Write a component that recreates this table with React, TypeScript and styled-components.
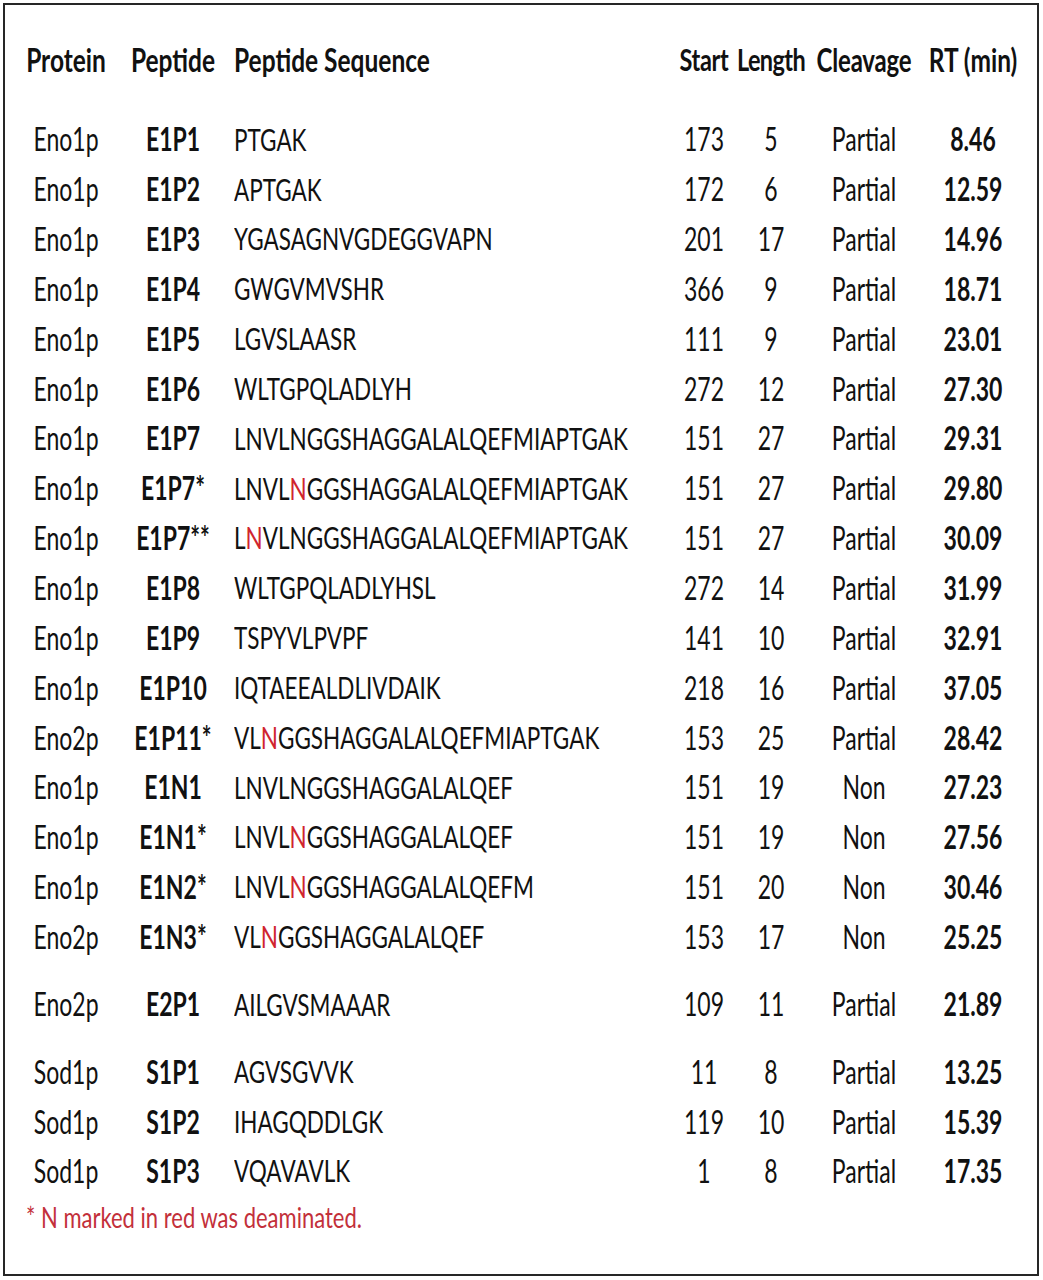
import React from 'react';
import styled, { createGlobalStyle } from 'styled-components';

const Global = createGlobalStyle`
  html, body { margin: 0; padding: 0; background: #ffffff; }
  body { font-family: Lato, "Open Sans", sans-serif; color: #111111; }
`;

const Frame = styled.div`
  box-sizing: border-box;
  margin: 3px 0 0 3px;
  width: 1036px;
  height: 1273px;
  border: 2px solid #262626;
  padding: 30px 0 0 15px;
  display: flex;
  flex-direction: column;
`;

const COLS = '92px 122px 440px 60px 74px 112px 106px';

const Group = styled.div<{ $top: number }>`
  display: flex;
  flex-direction: column;
  margin-top: ${(p) => p.$top}px;
`;

const Row = styled.div<{ $h: number }>`
  display: grid;
  grid-template-columns: ${COLS};
  height: ${(p) => p.$h}px;
  align-items: center;
`;

const Cell = styled.div<{ $left?: boolean; $bold?: boolean; $size?: number; $track?: number }>`
  text-align: ${(p) => (p.$left ? 'left' : 'center')};
  font-weight: ${(p) => (p.$bold ? 700 : 400)};
  font-size: ${(p) => p.$size ?? 23}px;
  letter-spacing: ${(p) => p.$track ?? 0}px;
  line-height: 1;
  white-space: nowrap;
`;

const Stretch = styled.span<{ $k?: number }>`
  display: inline-block;
  transform: scaleY(${(p) => p.$k ?? 1.4});
`;

const Red = styled.span`
  color: #d0242e;
`;

const Footer = styled.div`
  margin-top: 11px;
  padding-left: 6px;
  font-size: 22px;
  line-height: 1;
  color: #c3303a;
  white-space: nowrap;
`;

type R = [string, string, string, string, string, string, string];

const g1: R[] = [
  ['Eno1p', 'E1P1', 'PTGAK', '173', '5', 'Partial', '8.46'],
  ['Eno1p', 'E1P2', 'APTGAK', '172', '6', 'Partial', '12.59'],
  ['Eno1p', 'E1P3', 'YGASAGNVGDEGGVAPN', '201', '17', 'Partial', '14.96'],
  ['Eno1p', 'E1P4', 'GWGVMVSHR', '366', '9', 'Partial', '18.71'],
  ['Eno1p', 'E1P5', 'LGVSLAASR', '111', '9', 'Partial', '23.01'],
  ['Eno1p', 'E1P6', 'WLTGPQLADLYH', '272', '12', 'Partial', '27.30'],
  ['Eno1p', 'E1P7', 'LNVLNGGSHAGGALALQEFMIAPTGAK', '151', '27', 'Partial', '29.31'],
  ['Eno1p', 'E1P7*', 'LNVL[N]GGSHAGGALALQEFMIAPTGAK', '151', '27', 'Partial', '29.80'],
  ['Eno1p', 'E1P7**', 'L[N]VLNGGSHAGGALALQEFMIAPTGAK', '151', '27', 'Partial', '30.09'],
  ['Eno1p', 'E1P8', 'WLTGPQLADLYHSL', '272', '14', 'Partial', '31.99'],
  ['Eno1p', 'E1P9', 'TSPYVLPVPF', '141', '10', 'Partial', '32.91'],
  ['Eno1p', 'E1P10', 'IQTAEEALDLIVDAIK', '218', '16', 'Partial', '37.05'],
  ['Eno2p', 'E1P11*', 'VL[N]GGSHAGGALALQEFMIAPTGAK', '153', '25', 'Partial', '28.42'],
  ['Eno1p', 'E1N1', 'LNVLNGGSHAGGALALQEF', '151', '19', 'Non', '27.23'],
  ['Eno1p', 'E1N1*', 'LNVL[N]GGSHAGGALALQEF', '151', '19', 'Non', '27.56'],
  ['Eno1p', 'E1N2*', 'LNVL[N]GGSHAGGALALQEFM', '151', '20', 'Non', '30.46'],
  ['Eno2p', 'E1N3*', 'VL[N]GGSHAGGALALQEF', '153', '17', 'Non', '25.25'],
];

const g2: R[] = [['Eno2p', 'E2P1', 'AILGVSMAAAR', '109', '11', 'Partial', '21.89']];

const g3: R[] = [
  ['Sod1p', 'S1P1', 'AGVSGVVK', '11', '8', 'Partial', '13.25'],
  ['Sod1p', 'S1P2', 'IHAGQDDLGK', '119', '10', 'Partial', '15.39'],
  ['Sod1p', 'S1P3', 'VQAVAVLK', '1', '8', 'Partial', '17.35'],
];

function Seq({ s }: { s: string }) {
  const m = s.match(/^(.*)\[N\](.*)$/);
  if (!m) return <>{s}</>;
  return (
    <>
      {m[1]}
      <Red>N</Red>
      {m[2]}
    </>
  );
}

function DataRow({ r, h }: { r: R; h: number }) {
  return (
    <Row $h={h}>
      <Cell><Stretch>{r[0]}</Stretch></Cell>
      <Cell $bold><Stretch>{r[1]}</Stretch></Cell>
      <Cell $left $size={22.5}><Stretch><Seq s={r[2]} /></Stretch></Cell>
      <Cell><Stretch>{r[3]}</Stretch></Cell>
      <Cell><Stretch>{r[4]}</Stretch></Cell>
      <Cell><Stretch>{r[5]}</Stretch></Cell>
      <Cell $bold><Stretch>{r[6]}</Stretch></Cell>
    </Row>
  );
}

const heads: { t: string; size: number; track: number }[] = [
  { t: 'Protein', size: 24.5, track: 0 },
  { t: 'Peptide', size: 24.5, track: 0 },
  { t: 'Peptide Sequence', size: 24.5, track: 0 },
  { t: 'Start', size: 23.5, track: -0.3 },
  { t: 'Length', size: 23.5, track: -0.6 },
  { t: 'Cleavage', size: 24, track: -0.2 },
  { t: 'RT (min)', size: 24.5, track: 0 },
];

export default function App() {
  return (
    <>
      <Global />
      <Frame>
        <Row $h={50}>
          {heads.map((h, i) => (
            <Cell key={h.t} $bold $size={h.size} $track={h.track} $left={i === 2}>
              <Stretch $k={1.32}>{h.t}</Stretch>
            </Cell>
          ))}
        </Row>
        <Group $top={30}>
          {g1.map((r) => (
            <DataRow key={r[1]} r={r} h={49.85} />
          ))}
        </Group>
        <Group $top={17.5}>
          {g2.map((r) => (
            <DataRow key={r[1]} r={r} h={50} />
          ))}
        </Group>
        <Group $top={18}>
          {g3.map((r) => (
            <DataRow key={r[1]} r={r} h={49.5} />
          ))}
        </Group>
        <Footer>
          <Stretch $k={1.3}>* N marked in red was deaminated.</Stretch>
        </Footer>
      </Frame>
    </>
  );
}
